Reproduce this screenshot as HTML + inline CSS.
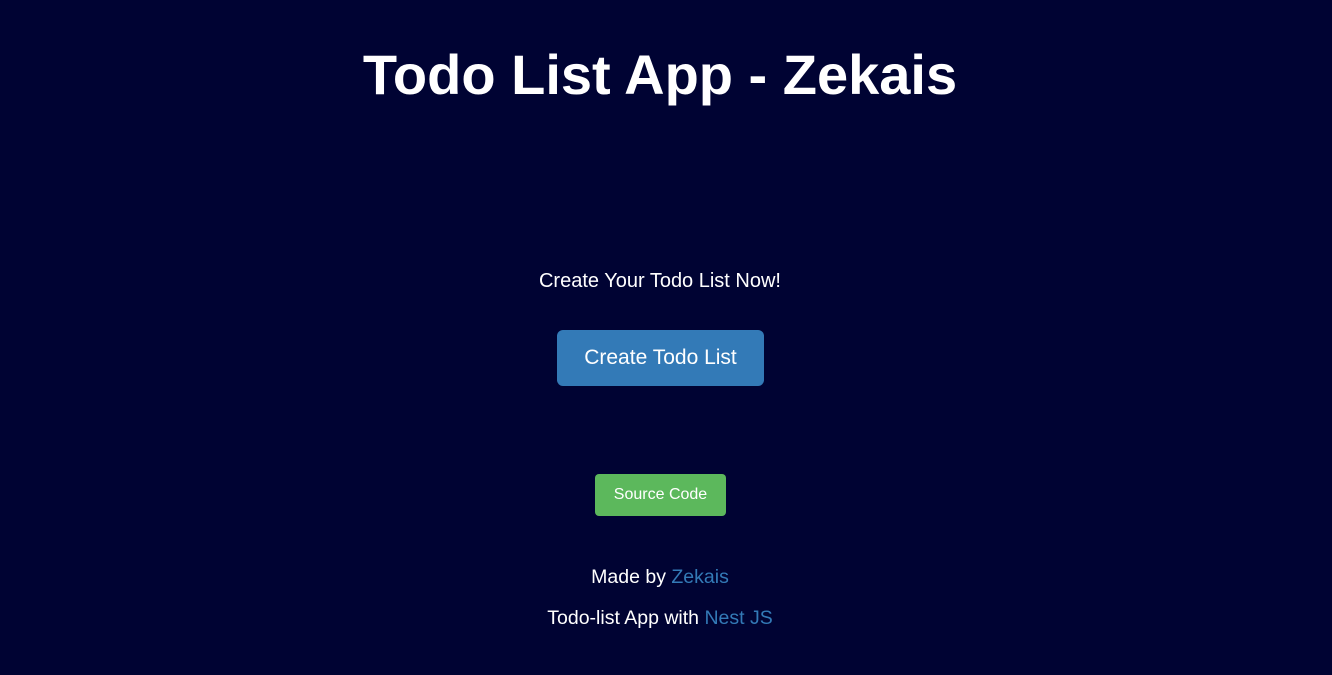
<!DOCTYPE html>
<html><head><style>
body{margin:0;background:#000333;width:1332px;height:675px;overflow:hidden;font-family:"Liberation Sans",sans-serif;color:#fff;position:relative}
.c{position:absolute;left:0;width:1320px;text-align:center}
h1{margin:0;font-size:56px;font-weight:bold;top:42px}
.b{position:absolute;border-radius:6px;color:#fff;display:flex;align-items:center;justify-content:center}
a{color:#337ab7;text-decoration:none}
</style></head><body>
<h1 class="c">Todo List App - Zekais</h1>
<div class="c" style="top:270px;font-size:20px">Create Your Todo List Now!</div>
<div class="b" style="left:557px;top:330px;width:207px;height:56px;background:#337ab7;font-size:21px">Create Todo List</div>
<div class="b" style="left:595px;top:474px;width:131px;height:42px;background:#5cb85c;font-size:16px;border-radius:4px">Source Code</div>
<div class="c" style="top:566px;font-size:19.5px">Made by <a>Zekais</a></div>
<div class="c" style="top:607px;font-size:19.5px">Todo-list App with <a>Nest JS</a></div>
</body></html>
